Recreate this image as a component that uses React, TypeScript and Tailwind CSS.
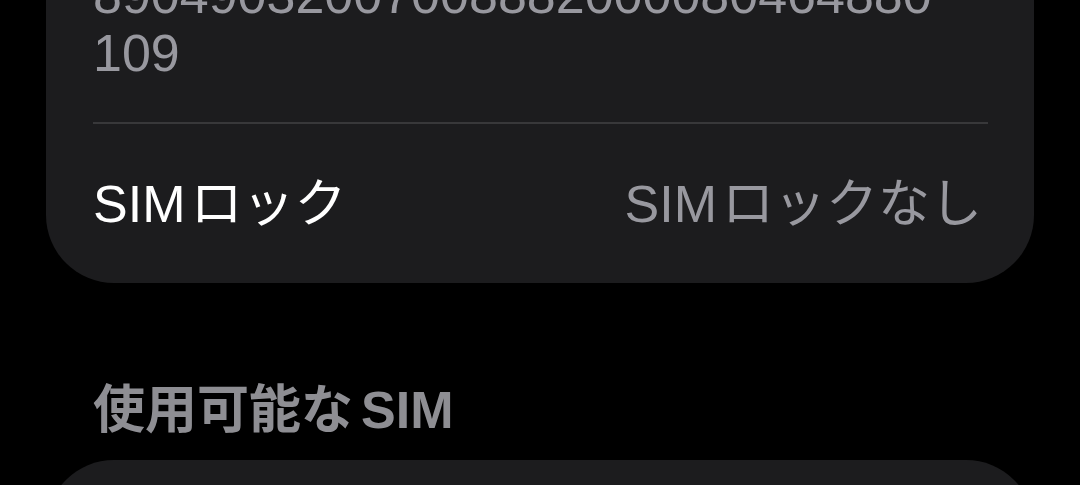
import React from 'react';

const font = "font-['Liberation_Sans','Noto_Sans_CJK_JP',sans-serif]";

const App: React.FC = () => {
  return (
    <div className={`h-[485px] w-full overflow-hidden bg-black px-[46px] ${font}`}>
      {/* SIM info card (top is scrolled off) */}
      <div className="-mt-[34px] rounded-b-[68px] bg-[#1c1c1e]">
        <div className="pl-[47px] text-[52px] leading-[58px] text-[#98989f]">
          <div>89049032007008882000080464880</div>
          <div>109</div>
        </div>
        <div className="mt-[40px] ml-[47px] mr-[46px] h-[2px] bg-[#38383a]" />
        <div className="flex h-[159px] items-center justify-between pl-[47px] pr-[52px] text-[52px]">
          <span className="text-white">
            <span className="mr-[5px]">SIM</span>ロック
          </span>
          <span className="text-[#98989f]">
            <span className="mr-[5px]">SIM</span>ロックなし
          </span>
        </div>
      </div>

      {/* Available SIM section */}
      <h2 className="mt-[97px] pl-[47px] text-[52px] font-bold leading-[60px] text-[#8e8e93]">
        使用可能な<span className="ml-[8px]">SIM</span>
      </h2>
      <div className="mt-[20px] h-[120px] rounded-t-[68px] bg-[#1c1c1e]" />
    </div>
  );
};

export default App;
